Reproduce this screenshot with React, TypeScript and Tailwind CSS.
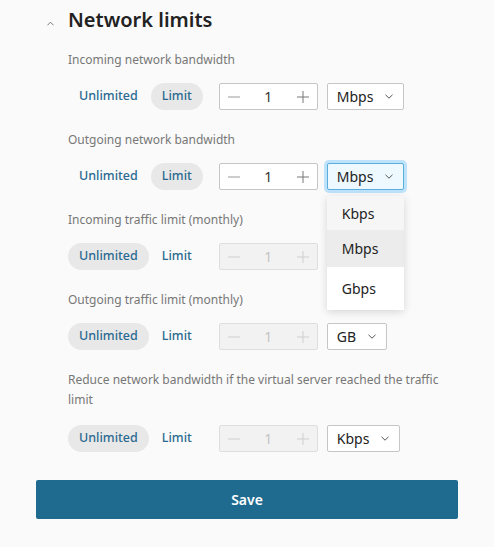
import React, { useState } from 'react';

const font = { fontFamily: '"Noto Sans", "Open Sans", sans-serif' };

type Mode = 'unlimited' | 'limit';

function Chevron({ up = false, className = '' }: { up?: boolean; className?: string }) {
  return (
    <svg viewBox="0 0 8 5" className={className} fill="none" stroke="currentColor" strokeWidth="1">
      <path d={up ? 'M0.5 4.5 L4 1 L7.5 4.5' : 'M0.5 0.8 L4 4.2 L7.5 0.8'} />
    </svg>
  );
}

function Toggle({ mode }: { mode: Mode }) {
  const base = 'h-[27px] px-[11px] rounded-full text-[12.5px] font-medium text-[#2b6a90] flex items-center';
  return (
    <div className="flex items-center gap-[2px]">
      <button className={`${base} ${mode === 'unlimited' ? 'bg-[#e8e8e8]' : ''}`}>Unlimited</button>
      <button className={`${base} ${mode === 'limit' ? 'bg-[#e8e8e8]' : ''}`}>Limit</button>
    </div>
  );
}

function Stepper({ disabled }: { disabled: boolean }) {
  return (
    <div
      className={`ml-4 h-[27px] w-[99px] flex items-center justify-between border rounded-[2px] px-[8px] ${
        disabled ? 'bg-[#f2f2f2] border-[#dedede] text-[#c4c4c4]' : 'bg-white border-[#c6c6c6] text-[#333]'
      }`}
    >
      <svg viewBox="0 0 12 12" className={`w-3 h-3 ${disabled ? 'text-[#cfcfcf]' : 'text-[#9a9a9a]'}`} stroke="currentColor" strokeWidth="1">
        <path d="M0 6 H12" />
      </svg>
      <span className="text-[14px]">1</span>
      <svg viewBox="0 0 12 12" className={`w-3 h-3 ${disabled ? 'text-[#cfcfcf]' : 'text-[#777]'}`} stroke="currentColor" strokeWidth="1">
        <path d="M0 6 H12 M6 0 V12" />
      </svg>
    </div>
  );
}

function UnitSelect({ value, focused = false, open = false, options = [] as string[] }: { value: string; focused?: boolean; open?: boolean; options?: string[] }) {
  return (
    <div className="relative ml-[9px]">
      <div
        className={`h-[27px] flex items-center gap-3 pl-[9px] pr-[10px] border rounded-[2px] text-[14px] text-[#222] ${
          focused ? 'bg-[#eef8ff] border-[#5aaede] ring-[3px] ring-[#bfe2fb]' : 'bg-white border-[#c6c6c6]'
        }`}
      >
        <span>{value}</span>
        <Chevron className="w-2 h-[5px] text-[#555]" />
      </div>
      {open && (
        <div className="absolute left-0 top-[33px] w-full bg-white shadow-[0_2px_8px_rgba(0,0,0,0.15)] rounded-[2px] z-10 flex flex-col text-[14px] text-[#222]">
          {options.map((o) => (
            <div
              key={o}
              className={`px-[15px] ${o === value ? 'bg-[#ececec] h-[37px]' : o === 'Kbps' ? 'bg-[#f6f6f6] h-[34px]' : 'bg-white h-[43px]'} flex items-center`}
            >
              {o}
            </div>
          ))}
        </div>
      )}
    </div>
  );
}

type Field = { label: string; mode: Mode; unit: string; focused?: boolean; open?: boolean };

const fields: Field[] = [
  { label: 'Incoming network bandwidth', mode: 'limit', unit: 'Mbps' },
  { label: 'Outgoing network bandwidth', mode: 'limit', unit: 'Mbps', focused: true, open: true },
  { label: 'Incoming traffic limit (monthly)', mode: 'unlimited', unit: '' },
  { label: 'Outgoing traffic limit (monthly)', mode: 'unlimited', unit: 'GB' },
  { label: 'Reduce network bandwidth if the virtual server reached the traffic limit', mode: 'unlimited', unit: 'Kbps' },
];

export default function App() {
  const [collapsed, setCollapsed] = useState(false);

  return (
    <div className="min-h-[547px] bg-[#fafafa] px-9 pt-[6px]" style={font}>
      <div className="flex items-center">
        <button onClick={() => setCollapsed(!collapsed)} className="w-8 flex justify-start pl-[11px] pt-[6px]">
          <Chevron up className="w-[7px] h-[5px] text-[#666]" />
        </button>
        <h2 className="text-[20px] leading-7 font-semibold text-[#222]">Network limits</h2>
      </div>

      {!collapsed && (
        <div className="pl-8 mt-4 flex flex-col gap-5">
          {fields.map((f, i) => (
            <div key={f.label}>
              <p className={`text-[12px] leading-5 text-[#777] ${i === 4 ? 'mb-[15px]' : 'mb-[13px]'}`}>{f.label}</p>
              <div className="flex items-center">
                <Toggle mode={f.mode} />
                <Stepper disabled={f.mode === 'unlimited'} />
                {f.unit && (
                  <UnitSelect value={f.unit} focused={f.focused} open={f.open} options={['Kbps', 'Mbps', 'Gbps']} />
                )}
              </div>
            </div>
          ))}
        </div>
      )}

      <button className="mt-[28px] w-full h-[39px] bg-[#1f6a8f] rounded-[2px] text-white text-[14px] font-semibold">
        Save
      </button>
    </div>
  );
}
